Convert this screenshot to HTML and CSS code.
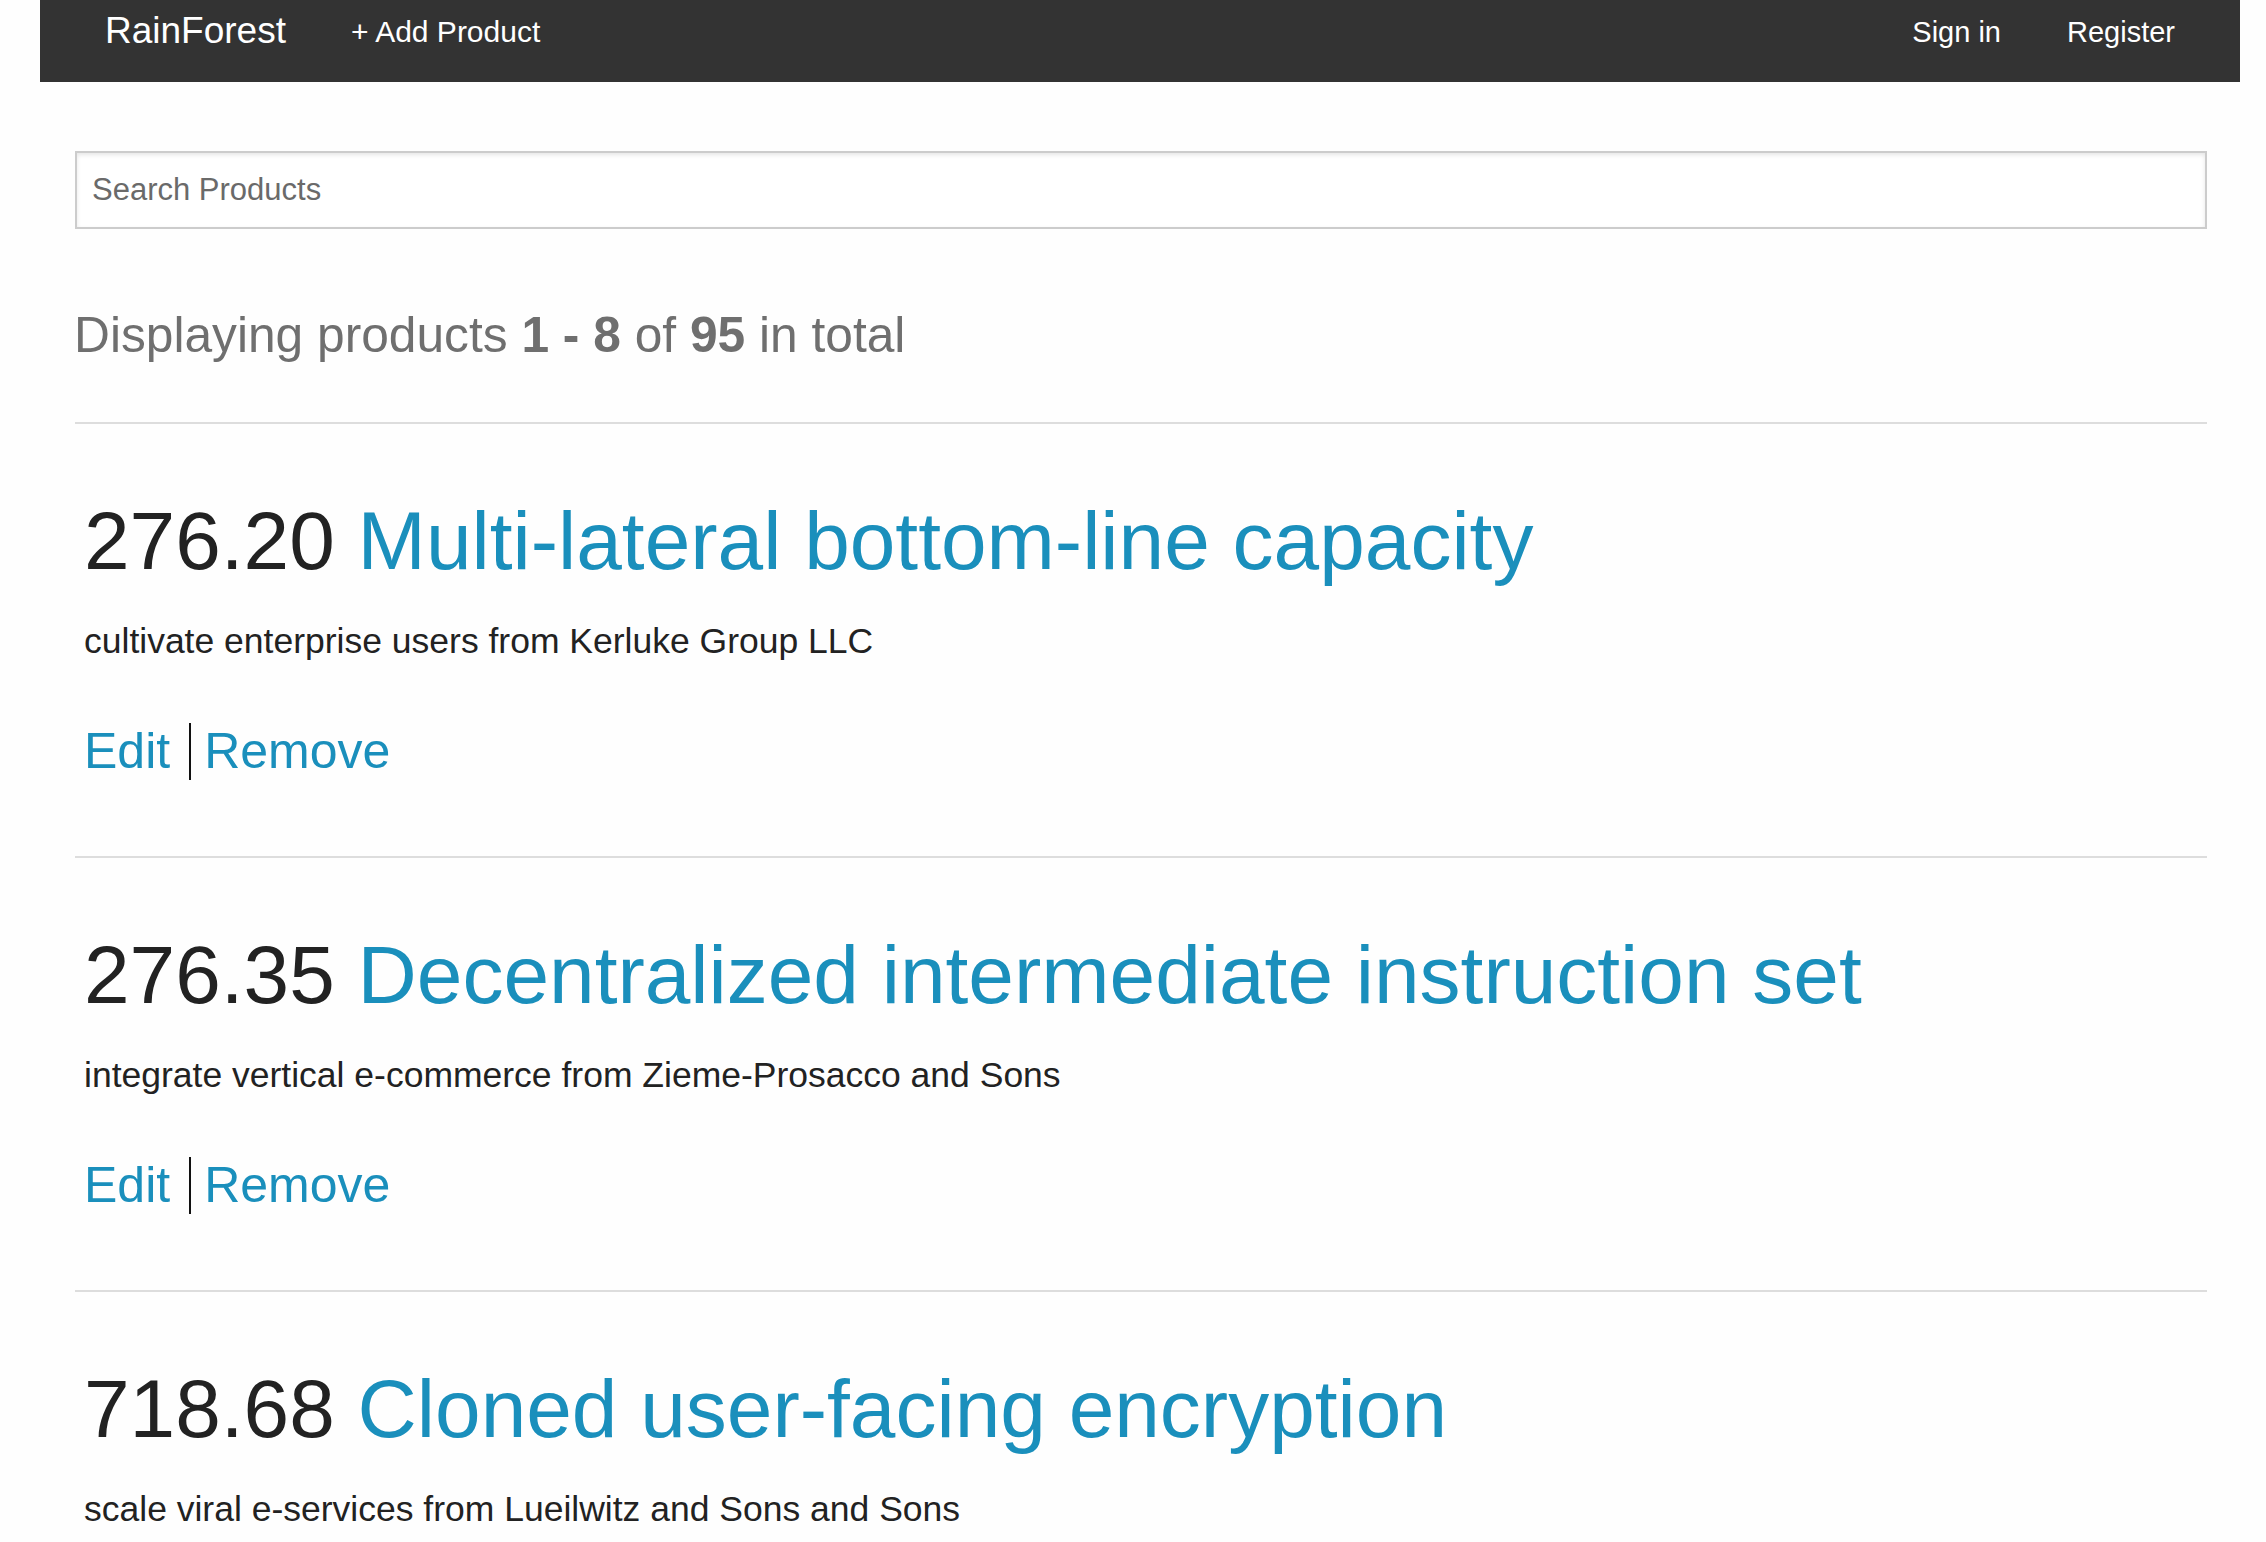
FILE: index.html
```html
<!DOCTYPE html>
<html lang="en">
<head>
<meta charset="utf-8">
<title>RainForest</title>
<link rel="stylesheet" href="styles.css">
</head>
<body>
<nav class="topbar">
  <a class="brand" href="#">RainForest</a>
  <ul class="nav nav-left">
    <li><a href="#">+ Add Product</a></li>
  </ul>
  <ul class="nav nav-right">
    <li><a href="#">Sign in</a></li>
    <li><a href="#">Register</a></li>
  </ul>
</nav>
<main class="page">
  <input class="search" type="text" placeholder="Search Products">
  <h3 class="summary">Displaying products <b>1 - 8</b> of <b>95</b> in total</h3>
  <hr class="rule">
  <article class="product">
    <h1 class="product-title"><span class="price">276.20</span> <a href="#">Multi-lateral bottom-line capacity</a></h1>
    <p class="product-desc">cultivate enterprise users from Kerluke Group LLC</p>
    <div class="actions"><a class="edit" href="#">Edit</a><a class="remove" href="#">Remove</a></div>
  </article>
  <hr class="rule">
  <article class="product">
    <h1 class="product-title"><span class="price">276.35</span> <a href="#">Decentralized intermediate instruction set</a></h1>
    <p class="product-desc">integrate vertical e-commerce from Zieme-Prosacco and Sons</p>
    <div class="actions"><a class="edit" href="#">Edit</a><a class="remove" href="#">Remove</a></div>
  </article>
  <hr class="rule">
  <article class="product product-last">
    <h1 class="product-title"><span class="price">718.68</span> <a href="#">Cloned user-facing encryption</a></h1>
    <p class="product-desc">scale viral e-services from Lueilwitz and Sons and Sons</p>
  </article>
</main>
</body>
</html>
```
FILE: styles.css
```css
html, body {
  margin: 0;
  padding: 0;
  background: #fefefe;
}

body {
  font-family: "Liberation Sans", Arial, Helvetica, sans-serif;
  color: #222;
  overflow: hidden;
}

a {
  text-decoration: none;
}

/* Top bar */
.topbar {
  display: flex;
  align-items: flex-start;
  height: 82px;
  margin: 0 26px 0 40px;
  background: #333;
}

.brand {
  margin-left: 65px;
  font-size: 37px;
  line-height: 62px;
  color: #fff;
}

.nav {
  display: flex;
  list-style: none;
  margin: 0;
  padding: 0;
}

.nav a {
  display: block;
  font-size: 29px;
  line-height: 64px;
  color: #fff;
}

.nav-left {
  margin-left: 65px;
}

.nav-left a {
  font-size: 30px;
}

.nav-right {
  margin-left: auto;
  margin-right: 65px;
  gap: 66px;
}

/* Page */
.page {
  padding: 0 59px 0 75px;
}

.search {
  display: block;
  box-sizing: border-box;
  width: 100%;
  height: 78px;
  margin: 69px 0 0;
  padding: 0 15px;
  border: 2px solid #ccc;
  border-radius: 0;
  background: #fff;
  box-shadow: inset 0 2px 4px rgba(0, 0, 0, 0.1);
  font-family: inherit;
  font-size: 31px;
  color: #222;
  outline: none;
}

.search::placeholder {
  color: #6a6a6a;
}

.summary {
  margin: 76px 0 57px -1px;
  font-size: 49.7px;
  line-height: 60px;
  font-weight: normal;
  color: #6f6f6f;
}

.summary b {
  font-weight: bold;
}

.rule {
  margin: 0;
  height: 0;
  border: 0;
  border-top: 2px solid #ddd;
}

.product {
  padding: 72px 0 76px 9px;
}

.product-title {
  margin: 0;
  font-size: 82px;
  line-height: 90px;
  font-weight: normal;
  color: #222;
  white-space: nowrap;
}

.product-title a {
  color: #1a8fbc;
}

.product-desc {
  margin: 35px 0 0;
  font-size: 35.5px;
  line-height: 40px;
  color: #222;
}

.actions {
  display: flex;
  height: 57px;
  margin-top: 62px;
  font-size: 50px;
  line-height: 57px;
}

.actions a {
  color: #1a8fbc;
}

.edit {
  padding-right: 19px;
  border-right: 2px solid #111;
}

.remove {
  margin-left: 13px;
}
```
